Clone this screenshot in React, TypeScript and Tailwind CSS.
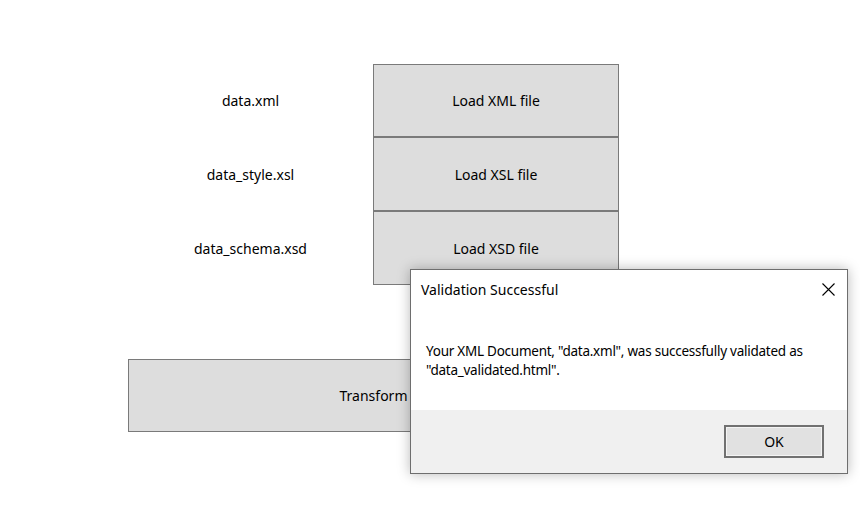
const files = [
    { name: 'data.xml', label: 'Load XML file', h: 'h-[73px]' },
    { name: 'data_style.xsl', label: 'Load XSL file', h: 'h-[74px]' },
    { name: 'data_schema.xsd', label: 'Load XSD file', h: 'h-[74px]' },
];

function ValidationDialog() {
    return (
        <div className="absolute left-[410px] top-[269px] w-[438px] h-[205px] border border-[#6e6e6e] bg-white shadow-[0_0_12px_rgba(0,0,0,0.28)] flex flex-col">
            <div className="flex items-center justify-between h-[38px] pl-[10px] pr-[9px]">
                <span className="text-[14px] text-black">Validation Successful</span>
                <svg width="13" height="13" viewBox="0 0 13 13" className="mr-[3px]">
                    <path d="M0.5 0.5 L12.5 12.5 M12.5 0.5 L0.5 12.5" stroke="#000" strokeWidth="1.1" fill="none" />
                </svg>
            </div>
            <div className="flex-1 px-[15px] pt-[34px] text-[13.5px] tracking-[-0.25px] leading-[19px] text-black whitespace-nowrap">
                Your XML Document, "data.xml", was successfully validated as<br />
                "data_validated.html".
            </div>
            <div className="h-[63px] bg-[#f0f0f0] flex items-start justify-end pt-[15px] pr-[23px]">
                <button className="w-[100px] h-[33px] border-2 border-[#717171] bg-[#e1e1e1] shadow-[inset_0_0_0_1px_#f4f4f4] text-[14px] text-black">
                    OK
                </button>
            </div>
        </div>
    )
}

export default function App() {
    return (
        <div className="relative w-[860px] h-[505px] bg-white overflow-hidden font-['Noto_Sans',sans-serif] text-black">
            <div className="pt-[64px] pl-[128px] w-[619px]">
                <div className="flex flex-col">
                    {files.map((f) => (
                        <div key={f.name} className={`flex ${f.h}`}>
                            <div className="w-[245px] flex items-center justify-center text-[14px]">{f.name}</div>
                            <button className="w-[246px] border border-[#7a7a7a] bg-[#dddddd] text-[14px]">{f.label}</button>
                        </div>
                    ))}
                </div>
                <button className="mt-[74px] w-[491px] h-[73px] border border-[#7a7a7a] bg-[#dddddd] text-[14px]">Transform</button>
            </div>
            <ValidationDialog />
        </div>
    )
}
